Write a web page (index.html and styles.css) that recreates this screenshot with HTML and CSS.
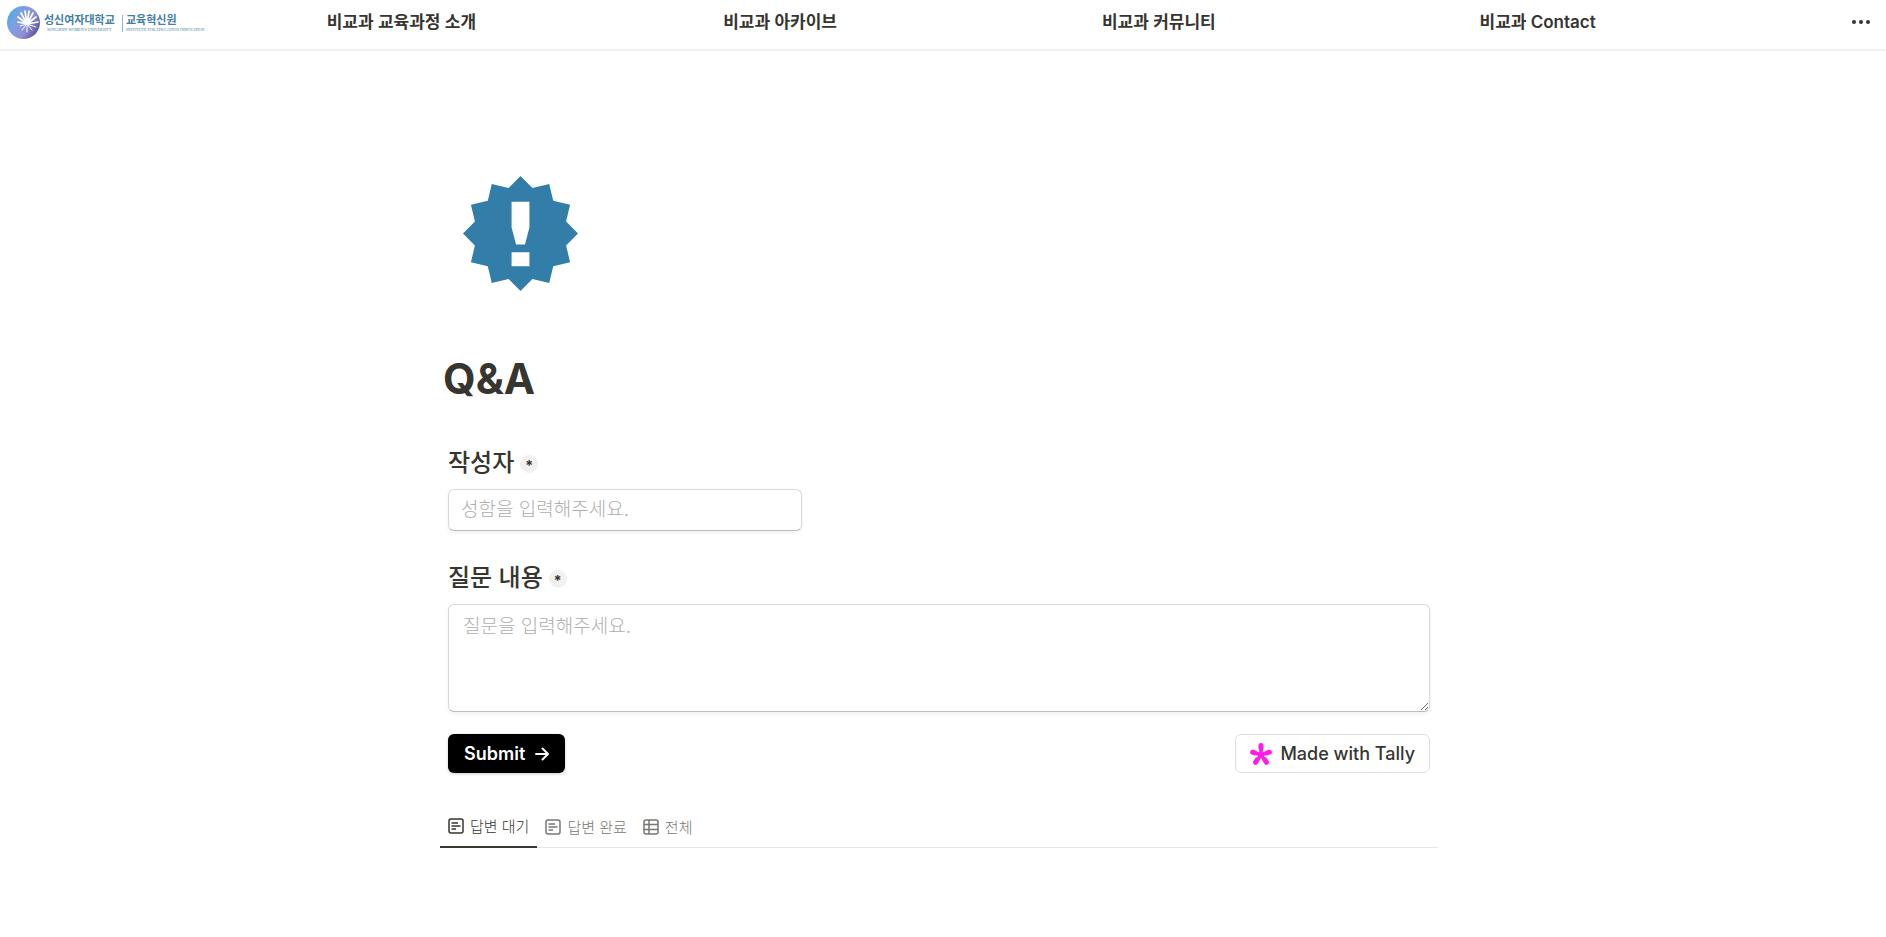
FILE: index.html
```html
<!DOCTYPE html>
<html lang="ko">
<head>
    <meta charset="UTF-8">
    <meta name="viewport" content="width=device-width, initial-scale=1.0">
    <title>Q&amp;A</title>
    <link rel="stylesheet" href="styles.css">
</head>
<body>
    <header class="topbar">
        <a class="logo" href="#">
            <svg width="200" height="40" viewBox="0 0 200 40" role="img">
                <defs>
                    <linearGradient id="ball" x1="0" y1="0.2" x2="1" y2="0.8">
                        <stop offset="0" stop-color="#45b0dc"/>
                        <stop offset="0.3" stop-color="#7f9fe4"/>
                        <stop offset="0.65" stop-color="#8f90d4"/>
                        <stop offset="1" stop-color="#51459a"/>
                    </linearGradient>
                </defs>
                <circle cx="16.500" cy="20.500" r="16.500" fill="url(#ball)"/>
                <g stroke="#fff" stroke-width="1.700" stroke-linecap="round">
                    <path d="M20 22L11 20M20 22L11 15M20 22L14 11M20 22L18 9M20 22L22 9M20 22L26 11M20 22L29 15M20 22L31 20"/>
                    <path d="M20 22L13 24M20 22L15 28M20 22L20 30M20 22L25 28M20 22L29 25" stroke-width="1"/>
                </g>
                <text class="logo-name" x="37" y="22">성신여자대학교</text>
                <text class="logo-sub" x="40" y="29">SUNGSHIN WOMEN'S UNIVERSITY</text>
                <path d="M115.500 13V30" stroke="#8fb3c8"/>
                <text class="logo-name" x="119" y="22">교육혁신원</text>
                <text class="logo-sub" x="119" y="29">INSTITUTE FOR EDUCATION INNOVATION</text>
            </svg>
        </a>
        <nav class="menu">
            <a href="#">비교과 교육과정 소개</a>
            <a href="#">비교과 아카이브</a>
            <a href="#">비교과 커뮤니티</a>
            <a href="#">비교과 Contact</a>
        </nav>
        <button class="more" type="button" aria-label="더보기">
            <svg width="18" height="4" viewBox="0 0 18 4">
                <circle cx="2" cy="2" r="2"/>
                <circle cx="9" cy="2" r="2"/>
                <circle cx="16" cy="2" r="2"/>
            </svg>
        </button>
    </header>

    <div class="content">
        <main class="page">
            <svg class="page-icon" width="115" height="115" viewBox="0 0 116 116">
                <path fill="#337ea9" d="M58 0L70 12L87 8L91 25L108 29L104 46L116 58L104 70L108 87L91 91L87 108L70 104L58 116L46 104L29 108L25 91L8 87L12 70L0 58L12 46L8 29L25 25L29 8L46 12Z"/>
                <path fill="#fff" d="M49 26H67V52L62.500 69H53.500L49 52ZM49 77H67V91H49Z"/>
            </svg>
            <h1>Q&amp;A</h1>

            <form class="question-form">
                <div class="field">
                    <label for="writer">작성자 <span class="required">*</span></label>
                    <input id="writer" type="text" placeholder="성함을 입력해주세요.">
                </div>
                <div class="field">
                    <label for="question">질문 내용 <span class="required">*</span></label>
                    <textarea id="question" placeholder="질문을 입력해주세요."></textarea>
                </div>
                <div class="form-footer">
                    <button class="submit" type="submit">
                        Submit
                        <svg width="14" height="14" viewBox="0 0 14 14" fill="none" stroke="#fff" stroke-width="2" stroke-linecap="round" stroke-linejoin="round">
                            <path d="M1 7H13M7.500 1.500L13 7L7.500 12.500"/>
                        </svg>
                    </button>
                    <a class="tally" href="#">
                        <svg width="22" height="22" viewBox="0 0 22 22" stroke="#ff1ce6" stroke-linecap="round">
                            <path d="M11 12V2.500M11 12L2.500 9M11 12L19.500 9M11 12L5.500 19.500M11 12L16.500 19.500" stroke-width="3.500"/>
                            <path d="M11 5V2.600M5 10L2.600 9.200M17 10L19.400 9.200M7 17L5.600 19.300M15 17L16.400 19.300" stroke-width="5"/>
                        </svg>
                        Made with Tally
                    </a>
                </div>
            </form>

            <div class="tabs" role="tablist">
                <button class="tab active" type="button" role="tab" aria-selected="true">
                    <svg width="16" height="16" viewBox="0 0 16 16">
                        <rect x="1" y="1" width="14" height="14" rx="2"/>
                        <path d="M3.500 5H10M3.500 8H12.500M3.500 11H8"/>
                    </svg>
                    답변 대기
                </button>
                <button class="tab" type="button" role="tab" aria-selected="false">
                    <svg width="16" height="16" viewBox="0 0 16 16">
                        <rect x="1" y="1" width="14" height="14" rx="2"/>
                        <path d="M3.500 5H10M3.500 8H12.500M3.500 11H8"/>
                    </svg>
                    답변 완료
                </button>
                <button class="tab" type="button" role="tab" aria-selected="false">
                    <svg width="16" height="16" viewBox="0 0 16 16">
                        <rect x="1" y="1" width="14" height="14" rx="2"/>
                        <path d="M1 5.500H15M1 10.500H15M6 1V15"/>
                    </svg>
                    전체
                </button>
            </div>
        </main>
    </div>
</body>
</html>
```
FILE: styles.css
```css
* {
    box-sizing: border-box;
}
body {
    margin: 0;
    background: #fff;
    color: #37352f;
    font-family: Inter, 'Noto Sans CJK KR', sans-serif;
}
a {
    color: inherit;
    text-decoration: none;
}
button {
    border: none;
    background: none;
    font-family: inherit;
    cursor: pointer;
}
.topbar {
    display: flex;
    align-items: center;
    height: 51px;
    padding: 0 16px 6px 7px;
    border-bottom: 2px solid #f1f1f0;
}
.logo {
    display: flex;
}
.logo-name {
    font-family: 'Noto Sans CJK KR', sans-serif;
    font-size: 11px;
    font-weight: 700;
    fill: #4480a4;
}
.logo-sub {
    font-family: 'Liberation Serif', serif;
    font-size: 4px;
    fill: #4480a4;
}
.menu {
    flex: 1;
    display: flex;
    margin: 0 125px 0 5px;
    font-size: 17px;
    font-weight: 600;
    line-height: 24px;
    text-align: center;
}
.menu a {
    flex: 1;
}
.more {
    display: flex;
    padding: 8px 0;
    fill: #37352f;
}
.content {
    padding-right: 8px;
}
.page {
    max-width: 998px;
    margin: 0 auto;
    padding-top: 125px;
}
.page-icon {
    display: block;
    margin-left: 23px;
}
h1 {
    margin: 61px 0 0;
    padding-left: 3px;
    font-size: 42px;
    font-weight: 700;
    line-height: 54px;
}
.question-form {
    padding: 38px 8px 0;
}
.field {
    margin-bottom: 28px;
}
.field label {
    display: flex;
    align-items: center;
    gap: 6px;
    height: 32px;
    margin-bottom: 13px;
    font-size: 24px;
    font-weight: 500;
}
.required {
    width: 18px;
    height: 18px;
    margin-top: 8px;
    border-radius: 50%;
    background: #f1f1f0;
    font-size: 14px;
    font-weight: 700;
    line-height: 22px;
    text-align: center;
}
.field input,
.field textarea {
    display: block;
    border: 1px solid #d8d8d7;
    border-bottom-color: #bcbcbb;
    border-radius: 6px;
    box-shadow: 0 2px 4px rgba(0, 0, 0, 0.06);
    background: #fff;
    color: #37352f;
    font-family: inherit;
    font-size: 19px;
    font-weight: 300;
    line-height: 26px;
}
.field input {
    width: 354px;
    height: 42px;
    padding: 0 12px 1px;
}
.field textarea {
    width: 100%;
    height: 108px;
    padding: 9px 14px;
}
.field input::placeholder,
.field textarea::placeholder {
    color: #afaeac;
}
.form-footer {
    display: flex;
    justify-content: space-between;
    margin-top: -6px;
}
.submit,
.tally {
    display: flex;
    align-items: center;
    height: 39px;
    padding: 0 16px;
    border-radius: 6px;
    font-size: 18px;
}
.submit {
    gap: 10px;
    background: #000;
    color: #fff;
    font-weight: 600;
    box-shadow: 0 1px 3px rgba(0, 0, 0, 0.2);
}
.tally {
    gap: 8px;
    padding: 0 14px;
    border: 1px solid #dededd;
    font-weight: 500;
}
.tabs {
    display: flex;
    margin-top: 33px;
    border-bottom: 1px solid #e6e6e5;
}
.tab {
    display: flex;
    align-items: center;
    gap: 6px;
    height: 42px;
    margin-bottom: -1px;
    padding: 0 8px 1px;
    color: #787774;
    font-size: 15px;
    font-weight: 300;
}
.tab svg {
    fill: none;
    stroke: currentColor;
    stroke-width: 1.500;
}
.tab.active {
    border-bottom: 2px solid #37352f;
    color: #37352f;
}
```
